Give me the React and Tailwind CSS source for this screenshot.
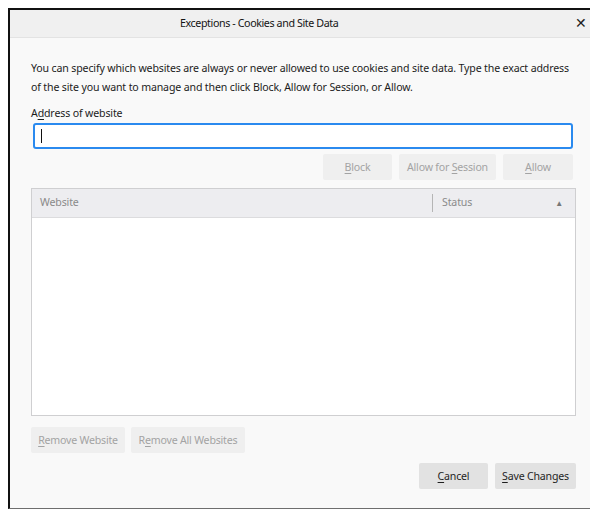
import React from "react";

const font = { fontFamily: '"Noto Sans", "Open Sans", sans-serif' };

function Key({ children }) {
  return <span className="underline underline-offset-2">{children}</span>;
}

function Btn({ children, disabled, className = "" }) {
  return (
    <button
      className={
        "h-[26px] rounded-[2px] text-[10.6px] tracking-[-0.2px] leading-none whitespace-nowrap text-center " +
        (disabled ? "bg-[#efefef] text-[#a3a3a3]" : "bg-[#e2e2e2] text-[#1f1f1f]") +
        " " +
        className
      }
    >
      {children}
    </button>
  );
}

export default function App() {
  return (
    <div className="w-[590px] h-[510px] bg-white overflow-hidden pt-2 pl-2 text-[10.6px] tracking-[-0.15px]" style={font}>
      <div className="w-[590px] h-[501px] border-l-2 border-t-2 border-[#111] border-b border-b-[#6e6e6e] bg-[#f9f9f9] flex flex-col">
        {/* title bar */}
        <div className="h-[28px] shrink-0 bg-[#f0f0f0] border-b border-[#e3e3e3] flex items-center relative">
          <span className="pl-[170px] text-[10.7px] tracking-[-0.4px] text-[#141414]">Exceptions - Cookies and Site Data</span>
          <span className="absolute left-[565px] top-[6px] text-[14px] leading-none text-[#222]">✕</span>
        </div>

        <div className="pl-[21px] pr-[16px] flex flex-col">
          <p className="mt-[21px] leading-[19px] text-[#1c1c1c] w-[545px]">
            You can specify which websites are always or never allowed to use cookies and site data. Type the exact address of the site you want to manage and then click Block, Allow for Session, or Allow.
          </p>
          <label className="mt-[7px] leading-[19px] text-[#1c1c1c]">
            A<Key>d</Key>dress of website
          </label>
          <div className="ml-[2px] w-[540px] h-[26px] rounded-[3px] border-2 border-[#2a8aef] bg-white flex items-center pl-[6px]">
            <span className="w-px h-[14px] bg-[#111]" />
          </div>

          <div className="mt-[5px] flex justify-end gap-[7px] w-[542px]">
            <Btn disabled className="w-[69px]"><Key>B</Key>lock</Btn>
            <Btn disabled className="w-[97px]">Allow for <Key>S</Key>ession</Btn>
            <Btn disabled className="w-[70px]"><Key>A</Key>llow</Btn>
          </div>

          {/* site list */}
          <div className="mt-[8px] w-[545px] h-[228px] border border-[#cfcfd1] bg-white flex flex-col">
            <div className="h-[29px] bg-[#ededf0] border-b border-[#dcdcde] flex items-center text-[#8a8a8a]">
              <span className="pl-[8px] w-[400px]">Website</span>
              <span className="w-px h-[18px] bg-[#b5b5b5]" />
              <span className="pl-[9px] flex-1">Status</span>
              <span className="pr-[12px] text-[8px] text-[#777]">▲</span>
            </div>
          </div>

          <div className="mt-[11px] flex gap-[6px]">
            <Btn disabled className="w-[94px]"><Key>R</Key>emove Website</Btn>
            <Btn disabled className="w-[114px]">R<Key>e</Key>move All Websites</Btn>
          </div>

          <div className="mt-[10px] flex justify-end gap-[7px] w-[545px]">
            <Btn className="w-[69px]"><Key>C</Key>ancel</Btn>
            <Btn className="w-[81px]"><Key>S</Key>ave Changes</Btn>
          </div>
        </div>
      </div>
    </div>
  );
}
